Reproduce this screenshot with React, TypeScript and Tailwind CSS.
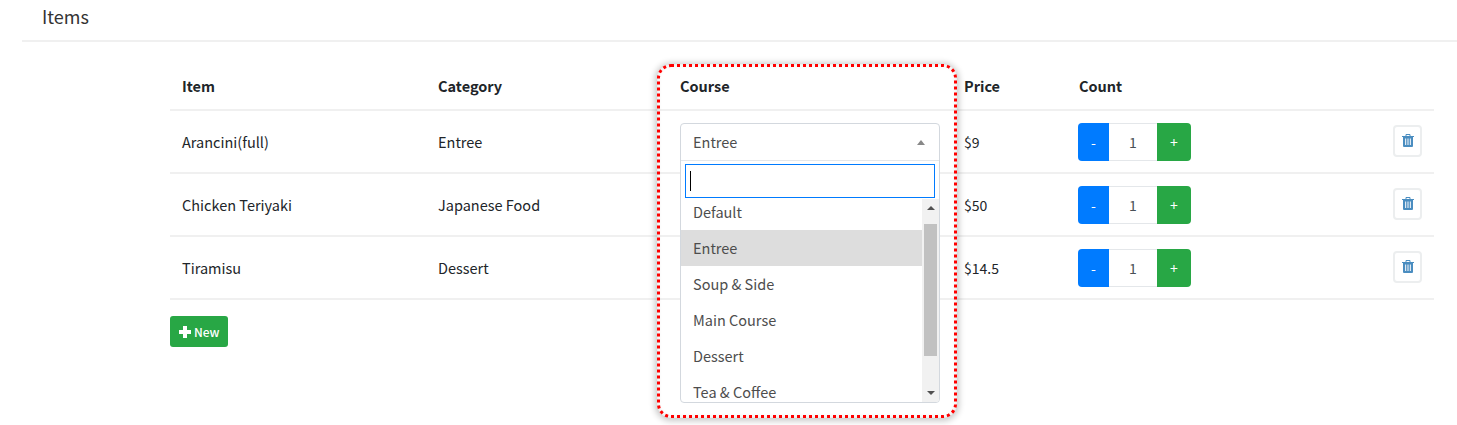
const rows = [
  { name: 'Arancini(full)', category: 'Entree', price: '$9' },
  { name: 'Chicken Teriyaki', category: 'Japanese Food', price: '$50' },
  { name: 'Tiramisu', category: 'Dessert', price: '$14.5' },
]

const courses = ['Default', 'Entree', 'Soup & Side', 'Main Course', 'Dessert', 'Tea & Coffee']

function TrashIcon() {
  return (
    <svg width="12" height="13" viewBox="0 0 12 13">
      <path d="M4 2V.5h4V2" fill="none" stroke="#4a8dc0" />
      <path d="M0 2h12v1H0z" fill="#4a8dc0" />
      <path d="M1 3h10v9a1 1 0 0 1-1 1H2a1 1 0 0 1-1-1z" fill="#4a8dc0" />
      <path d="M3 4.5h1.2V11H3zM5.4 4.5h1.2V11H5.4zM7.8 4.5H9V11H7.8z" fill="#dfe9f3" />
    </svg>
  )
}

function PlusIcon() {
  return (
    <svg width="12" height="12" viewBox="0 0 12 12">
      <path d="M4 0h4v4h4v4H8v4H4V8H0V4h4z" fill="#fff" />
    </svg>
  )
}

function Counter() {
  return (
    <div className="-ml-px flex h-[38px] w-[113px] items-stretch">
      <button className="w-[31px] rounded-l bg-[#007bff] text-[14px] text-white">-</button>
      <div className="flex w-[48px] items-center justify-center border-y border-[#e4e7ea] text-[14px] text-[#495057]">1</div>
      <button className="w-[34px] rounded-r bg-[#28a745] text-[14px] text-white">+</button>
    </div>
  )
}

function CourseDropdown() {
  return (
    <div className="absolute left-[680px] top-[123px] h-[280px] w-[260px] overflow-hidden rounded border border-[#d3d8de] bg-white text-[#4d4d4d]">
      <div className="flex h-[37px] items-center justify-between border-b border-[#e4e7ea] pl-3 pr-[14px]">
        <span>Entree</span>
        <span className="h-0 w-0 border-x-[4px] border-b-[5px] border-x-transparent border-b-[#888]" />
      </div>
      <div className="flex h-[38px] items-center px-1 pt-[3px] pb-[1px]">
        <div className="flex h-full w-full items-center border border-[#007bff] px-1">
          <span className="h-[20px] w-px bg-black" />
        </div>
      </div>
      <div className="relative h-[203px] overflow-hidden">
        <div className="-mt-[5px]">
          {courses.map((c) => (
            <div key={c} className={`flex h-9 items-center px-3 ${c === 'Entree' ? 'bg-[#ddd]' : ''}`}>
              {c}
            </div>
          ))}
        </div>
        <div className="absolute right-0 top-0 flex h-full w-[17px] flex-col items-center bg-[#f1f1f1]">
          <span className="mt-[7px] h-0 w-0 border-x-[4px] border-b-[4px] border-x-transparent border-b-[#505050]" />
          <span className="mt-[14px] h-[132px] w-[13px] bg-[#c1c1c1]" />
          <span className="mt-auto mb-[7px] h-0 w-0 border-x-[4px] border-t-[4px] border-x-transparent border-t-[#505050]" />
        </div>
      </div>
    </div>
  )
}

export default function App() {
  return (
    <div className="relative h-[425px] w-[1457px] overflow-hidden bg-white font-['Noto_Sans_CJK_SC',sans-serif] text-[14.5px] leading-[22px] text-[#212529]">
      <div className="ml-[22px] h-[42px] border-b-2 border-[#f0f0f0] pl-5 pt-[3px] text-[18px] leading-[26px] text-[#333]">Items</div>

      <div className="ml-[170px] mt-[20px] w-[1264px]">
        <table className="w-full table-fixed border-collapse">
          <thead>
            <tr className="h-[48px] border-b-2 border-[#f0f0f0] text-left">
              <th className="w-[256px] px-3 font-bold">Item</th>
              <th className="w-[242px] px-3 font-bold">Category</th>
              <th className="w-[284px] px-3 font-bold">Course</th>
              <th className="w-[115px] px-3 font-bold">Price</th>
              <th className="px-3 font-bold">Count</th>
            </tr>
          </thead>
          <tbody>
            {rows.map((r) => (
              <tr key={r.name} className="h-[63px] border-b-2 border-[#f0f0f0]">
                <td className="px-3">{r.name}</td>
                <td className="px-3">{r.category}</td>
                <td className="px-3" />
                <td className="px-3 text-[14px]">{r.price}</td>
                <td className="px-3">
                  <div className="flex items-center justify-between">
                    <Counter />
                    <button className="mb-[2px] flex h-[32px] w-[29px] items-center justify-center rounded border-2 border-[#eceeef]">
                      <TrashIcon />
                    </button>
                  </div>
                </td>
              </tr>
            ))}
          </tbody>
        </table>

        <button className="mt-4 flex h-[31px] w-[58px] items-center gap-[3px] rounded-[3px] bg-[#28a745] pl-[9px] text-[12px] font-medium text-white">
          <PlusIcon />
          New
        </button>
      </div>

      <CourseDropdown />

      {/* red dotted annotation round the course column */}
      <div className="absolute left-[657px] top-[64px] h-[354px] w-[300px] rounded-[14px] shadow-[0_1px_6px_2px_rgba(0,0,0,0.22),inset_0_0_5px_rgba(0,0,0,0.15)]">
        <svg width="300" height="354" viewBox="0 0 300 354" className="block">
          <rect x="1.5" y="1.5" width="297" height="351" rx="12.5" fill="none" stroke="#ff0000" strokeWidth="3" strokeDasharray="3 3" />
        </svg>
      </div>
    </div>
  )
}
